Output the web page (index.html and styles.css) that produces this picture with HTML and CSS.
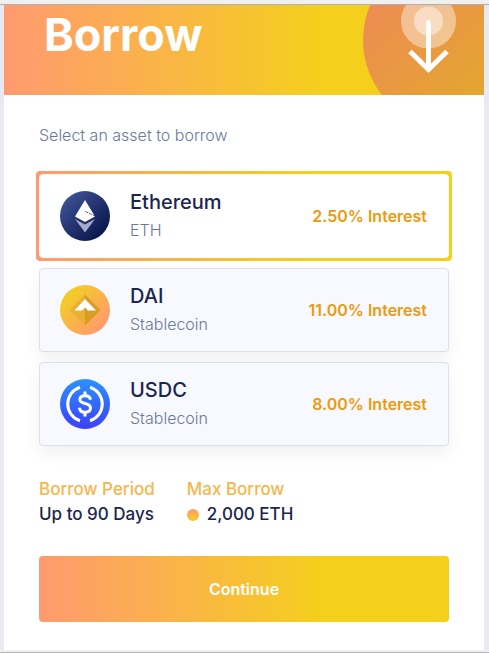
FILE: index.html
```
<!DOCTYPE html>
<html lang="en">
<head>
    <meta charset="UTF-8">
    <meta name="viewport" content="width=device-width, initial-scale=1.0">
    <title>Borrow</title>
    <link rel="stylesheet" href="styles.css">
</head>
<body>
    <main class="panel">
        <header class="hero">
            <h1>Borrow</h1>
            <svg class="hero-art" width="121" height="90" viewBox="0 0 121 90" aria-hidden="true">
                <defs>
                    <linearGradient id="disc" x1="0" y1="0.2" x2="0.7" y2="0.9">
                        <stop offset="0" stop-color="#ef8957"/>
                        <stop offset="1" stop-color="#e2a92b"/>
                    </linearGradient>
                </defs>
                <circle cx="89" cy="35" r="89" fill="url(#disc)"/>
                <circle cx="65.500" cy="16" r="27.500" fill="#fff" fill-opacity="0.42"/>
                <circle cx="65.500" cy="16" r="14.500" fill="#fff" fill-opacity="0.45"/>
                <path d="M65.500 17.500V64" stroke="#fff" stroke-width="5" stroke-linecap="round"/>
                <path d="M47 46.500L65.500 64.500L84 46.500" fill="none" stroke="#fff" stroke-width="5"/>
            </svg>
        </header>

        <section class="content">
            <p class="hint">Select an asset to borrow</p>

            <ul class="assets">
                <li class="selected">
                    <button type="button" class="asset" aria-pressed="true">
                        <svg class="coin" viewBox="0 0 50 50" aria-hidden="true">
                            <defs>
                                <linearGradient id="eth" x1="0.1" y1="0.1" x2="0.85" y2="0.9">
                                    <stop offset="0" stop-color="#3f5395"/>
                                    <stop offset="1" stop-color="#08154a"/>
                                </linearGradient>
                            </defs>
                            <circle cx="25" cy="25" r="25" fill="url(#eth)"/>
                            <path d="M25 9L35 25.500L25 31L15 25.500Z" fill="#fff"/>
                            <path d="M25.500 20.500L35 25" stroke="#24346f" stroke-width="0.800" stroke-dasharray="3 1"/>
                            <path d="M15 28L25 33.500L35 28L25 41.500Z" fill="#a5accb"/>
                        </svg>
                        <span class="asset-name">
                            <span class="title">Ethereum</span>
                            <span class="type">ETH</span>
                        </span>
                        <span class="rate">2.50% Interest</span>
                    </button>
                </li>
                <li>
                    <button type="button" class="asset" aria-pressed="false">
                        <svg class="coin" viewBox="0 0 50 50" aria-hidden="true">
                            <defs>
                                <linearGradient id="dai" x1="0.15" y1="0.15" x2="0.85" y2="0.85">
                                    <stop offset="0.100" stop-color="#f4ca2b"/>
                                    <stop offset="1" stop-color="#ff9a6c"/>
                                </linearGradient>
                            </defs>
                            <circle cx="25" cy="25" r="25" fill="url(#dai)"/>
                            <path d="M25 9.500L9.500 25L25 40.500Z" fill="#e8b035"/>
                            <path d="M25 9.500L40.500 25L25 40.500Z" fill="#d99d26"/>
                            <path d="M25 14L36 25.500H28L25 22.500L22 25.500H14.500Z" fill="#fff"/>
                        </svg>
                        <span class="asset-name">
                            <span class="title">DAI</span>
                            <span class="type">Stablecoin</span>
                        </span>
                        <span class="rate">11.00% Interest</span>
                    </button>
                </li>
                <li>
                    <button type="button" class="asset" aria-pressed="false">
                        <svg class="coin" viewBox="0 0 50 50" aria-hidden="true">
                            <defs>
                                <linearGradient id="usdc" x1="0" y1="0" x2="0" y2="1">
                                    <stop offset="0" stop-color="#2b91ff"/>
                                    <stop offset="1" stop-color="#3c40fb"/>
                                </linearGradient>
                            </defs>
                            <circle cx="25" cy="25" r="25" fill="url(#usdc)"/>
                            <g fill="none" stroke="#fff" stroke-width="3">
                                <path d="M20 8.300A17.500 17.500 0 0 0 20 41.700"/>
                                <path d="M30 8.300A17.500 17.500 0 0 1 30 41.700"/>
                                <path d="M30.300 20.800C30.300 18.200 28.200 16.800 25.200 16.800C21.800 16.800 19.900 18.400 19.900 20.500C19.900 26 30.500 23 30.500 29C30.500 31.700 28.200 33.200 25.100 33.200C21.800 33.200 19.500 31.600 19.500 28.700"/>
                                <path d="M25 12.500V17M25 33V37.500"/>
                            </g>
                        </svg>
                        <span class="asset-name">
                            <span class="title">USDC</span>
                            <span class="type">Stablecoin</span>
                        </span>
                        <span class="rate">8.00% Interest</span>
                    </button>
                </li>
            </ul>

            <dl class="terms">
                <div>
                    <dt>Borrow Period</dt>
                    <dd>Up to 90 Days</dd>
                </div>
                <div>
                    <dt>Max Borrow</dt>
                    <dd><span class="dot"></span>2,000 ETH</dd>
                </div>
            </dl>

            <button type="button" class="continue-btn">Continue</button>
        </section>
    </main>
</body>
</html>
```
FILE: styles.css
```
* {
    box-sizing: border-box;
    margin: 0;
    padding: 0;
}

body {
    min-height: 100vh;
    display: flex;
    flex-direction: column;
    background: #e9eaf1;
    border-top: 4px solid #f0f0f0;
    border-bottom: 1px solid #b8b8b8;
    color: #1b264f;
    font-family: Inter, "Liberation Sans", sans-serif;
    font-size: 16px;
}

.panel {
    flex: 1;
    padding: 0 5px 0 4px;
    border-top: 1px solid #b0b0b0;
    border-bottom: 2px solid #f0f0f0;
    display: flex;
    flex-direction: column;
}

.hero {
    position: relative;
    height: 90px;
    padding: 2px 40px;
    background: linear-gradient(to right, #ff9a70, #f4d01c 67%);
    overflow: hidden;
}

h1 {
    color: #fff;
    font-size: 45px;
    font-weight: 700;
    line-height: 56px;
}

.hero-art {
    position: absolute;
    top: 0;
    right: 0;
}

.content {
    flex: 1;
    padding: 28px 35px;
    background: #fff;
}

.hint {
    margin-bottom: 27px;
    color: #6c7899;
    font-weight: 300;
    line-height: 24px;
}

.assets {
    display: flex;
    flex-direction: column;
    gap: 10px;
    list-style: none;
}

.asset {
    display: flex;
    align-items: center;
    width: 100%;
    height: 84px;
    padding: 0 21px 0 20px;
    background: #f8f9fe;
    border: 1px solid #dcdfee;
    border-radius: 4px;
    box-shadow: 0 8px 16px rgba(0, 0, 0, 0.06);
    color: inherit;
    font: inherit;
    text-align: left;
    cursor: pointer;
}

/* gradient frame around the chosen asset */
.selected {
    margin: -3px;
    padding: 3px;
    background: linear-gradient(to right, #ff9a70, #f4d01c 67%);
    border-radius: 4px;
}

.selected .asset {
    background: #fff;
    border-color: #fff;
    box-shadow: none;
}

.coin {
    width: 50px;
    height: 50px;
    margin-right: 20px;
    flex-shrink: 0;
}

.asset-name {
    flex: 1;
}

.title,
.type {
    display: block;
    line-height: 28px;
}

.title {
    font-size: 20px;
    font-weight: 500;
}

.type {
    color: #6c7899;
    font-weight: 300;
}

.rate {
    color: #ec9a0c;
    font-weight: 600;
}

.terms {
    display: flex;
    gap: 32px;
    margin-top: 31px;
    font-size: 17px;
    font-weight: 500;
    line-height: 25px;
}

dt {
    color: #f7b64b;
}

dd {
    display: flex;
    align-items: center;
}

.dot {
    width: 12px;
    height: 12px;
    margin-right: 8px;
    border-radius: 50%;
    background: linear-gradient(#ff9a70, #f4d01c);
}

.continue-btn {
    width: 100%;
    height: 66px;
    margin-top: 29px;
    border: none;
    border-radius: 4px;
    background: linear-gradient(to right, #ff9a70, #f4d01c 70%);
    color: #fff;
    font: inherit;
    font-weight: 600;
    cursor: pointer;
}
```
